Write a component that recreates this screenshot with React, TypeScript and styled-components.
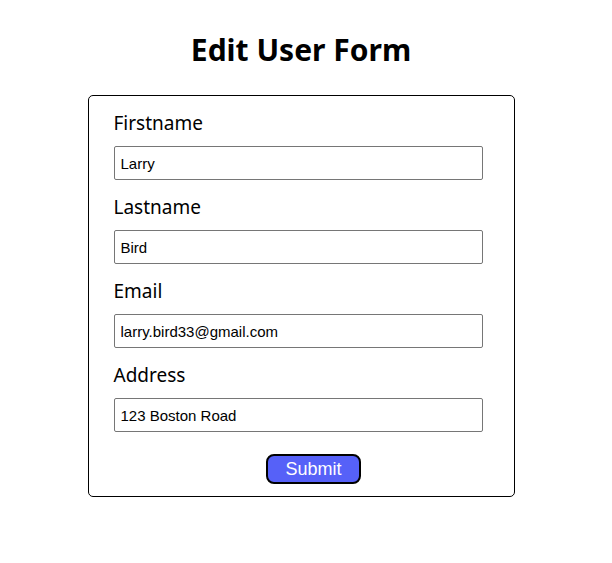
import React from "react";
import styled, { createGlobalStyle } from "styled-components";

const GlobalStyle = createGlobalStyle`
  body {
    margin: 0;
    background: #ffffff;
    font-family: "Noto Sans", "Open Sans", sans-serif;
    color: #000;
  }
`;

const Page = styled.div`
  width: 602px;
  display: flex;
  flex-direction: column;
  align-items: center;
`;

const Title = styled.h1`
  margin: 29px 0 0;
  height: 66px;
  font-family: "Noto Sans", sans-serif;
  font-size: 30px;
  line-height: 42px;
  font-weight: 700;
`;

const Card = styled.form`
  box-sizing: border-box;
  width: 427px;
  border: 1px solid #000;
  border-radius: 5px;
  padding: 13px 25px 12px;
  display: flex;
  flex-direction: column;
`;

const Field = styled.div`
  display: flex;
  flex-direction: column;
  margin-bottom: 13px;
`;

const Label = styled.label`
  font-family: "Noto Sans", sans-serif;
  font-size: 19px;
  line-height: 28px;
  margin-bottom: 9px;
`;

const Input = styled.input`
  box-sizing: border-box;
  width: 369px;
  height: 34px;
  border: 1px solid #767676;
  border-radius: 2px;
  padding: 0 6px;
  font-family: "Liberation Sans", Arial, sans-serif;
  font-size: 15px;
  color: #000;
  outline: none;
`;

const Actions = styled.div`
  display: flex;
  justify-content: center;
  padding: 9px 0 0 25px;
`;

const SubmitButton = styled.button`
  box-sizing: border-box;
  width: 95px;
  height: 30px;
  border: 2px solid #000;
  border-radius: 8px;
  background: #5661f8;
  color: #fff;
  font-family: "Liberation Sans", Arial, sans-serif;
  font-size: 18px;
  padding: 0;
  cursor: pointer;
`;

const fields = [
  { id: "firstname", label: "Firstname", value: "Larry" },
  { id: "lastname", label: "Lastname", value: "Bird" },
  { id: "email", label: "Email", value: "larry.bird33@gmail.com" },
  { id: "address", label: "Address", value: "123 Boston Road" },
];

export default function App() {
  return (
    <>
      <GlobalStyle />
      <Page>
        <Title>Edit User Form</Title>
        <Card onSubmit={(e) => e.preventDefault()}>
          {fields.map((f) => (
            <Field key={f.id}>
              <Label htmlFor={f.id}>{f.label}</Label>
              <Input id={f.id} defaultValue={f.value} />
            </Field>
          ))}
          <Actions>
            <SubmitButton type="submit">Submit</SubmitButton>
          </Actions>
        </Card>
      </Page>
    </>
  );
}
